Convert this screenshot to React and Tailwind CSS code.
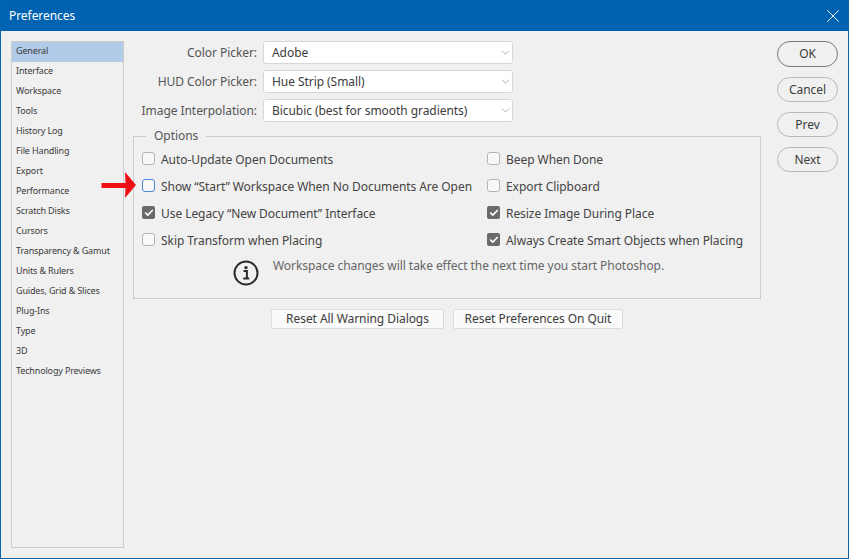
import { X, ChevronDown, Check } from 'lucide-react';

const categories = [
  'General', 'Interface', 'Workspace', 'Tools', 'History Log', 'File Handling', 'Export',
  'Performance', 'Scratch Disks', 'Cursors', 'Transparency & Gamut', 'Units & Rulers',
  'Guides, Grid & Slices', 'Plug-Ins', 'Type', '3D', 'Technology Previews',
];

const selects = [
  { label: 'Color Picker:', value: 'Adobe' },
  { label: 'HUD Color Picker:', value: 'Hue Strip (Small)' },
  { label: 'Image Interpolation:', value: 'Bicubic (best for smooth gradients)' },
];

const leftOptions = [
  { label: 'Auto-Update Open Documents' },
  { label: 'Show “Start” Workspace When No Documents Are Open', focused: true },
  { label: 'Use Legacy “New Document” Interface', checked: true },
  { label: 'Skip Transform when Placing' },
];

const rightOptions = [
  { label: 'Beep When Done' },
  { label: 'Export Clipboard' },
  { label: 'Resize Image During Place', checked: true },
  { label: 'Always Create Smart Objects when Placing', checked: true },
];

function Option({ label, checked, focused }) {
  return (
    <div className="flex h-[27px] items-center gap-[6px]">
      {checked ? (
        <span className="flex h-[13px] w-[13px] items-center justify-center rounded-[2px] bg-[#6a6a6a]">
          <Check className="h-[10px] w-[10px] text-white" strokeWidth={4} />
        </span>
      ) : (
        <span
          className={`h-[13px] w-[13px] rounded-[3px] border bg-[#f8f8f8] ${
            focused ? 'border-[#4a8ad4]' : 'border-[#b4b4b4]'
          }`}
        />
      )}
      <span className="whitespace-nowrap pt-[2px]">{label}</span>
    </div>
  );
}

function SideButton({ label, primary }) {
  return (
    <button
      className={`w-[61px] rounded-full border text-[12px] text-[#3c3c3c] ${
        primary ? 'h-[26px] border-[#7a7a7a]' : 'h-[25px] border-[#b9b9b9]'
      }`}
    >
      {label}
    </button>
  );
}

export default function App() {
  return (
    <div className="relative flex h-[559px] w-[849px] flex-col overflow-hidden border-x border-b border-[#0a64ad] bg-[#f0f0f0] font-['Noto_Sans',sans-serif] text-[12px] tracking-[-0.06px] text-[#444444]">
      {/* Title bar */}
      <div className="flex h-[31px] shrink-0 items-center justify-between bg-[#0063b1] pl-[8px] pr-[4px] text-[12px] text-white">
        <span className="pt-[1px]">Preferences</span>
        <X className="h-[22px] w-[22px]" strokeWidth={1} />
      </div>

      <div className="flex flex-1 pl-[10px] pr-[10px] pt-[10px] pb-[10px]">
        {/* Category list */}
        <div className="h-[507px] w-[113px] shrink-0 border border-[#cccccc] bg-[#f0f0f0] text-[9px] tracking-[-0.15px] text-[#3a3a3a]">
          {categories.map((name, i) => (
            <div
              key={name}
              className={`flex h-[20px] items-center whitespace-nowrap pb-[2px] pl-[4px] ${
                i === 0 ? 'bg-[#b1cbe8]' : ''
              }`}
            >
              {name}
            </div>
          ))}
        </div>

        {/* Main panel */}
        <div className="ml-[9px] w-[628px] shrink-0">
          <div className="flex flex-col gap-[6px]">
            {selects.map((s) => (
              <div key={s.label} className="flex items-center">
                <span className="w-[125px] whitespace-nowrap pr-[1px] text-right text-[#555555]">{s.label}</span>
                <div className="ml-[5px] flex h-[23px] w-[250px] items-center justify-between rounded-[3px] border border-[#d6d6d6] bg-white pl-[8px] text-[#3c3c3c]">
                  <span>{s.value}</span>
                  <ChevronDown className="h-[13px] w-[13px] text-[#999999]" strokeWidth={1.5} />
                </div>
              </div>
            ))}
          </div>

          <fieldset className="mt-[5px] h-[172px] border border-[#cccccc] pl-[8px]">
            <legend className="ml-[4px] px-[8px] text-[#555555]">Options</legend>
            <div className="flex">
              <div className="w-[345px]">
                {leftOptions.map((o) => (
                  <Option key={o.label} {...o} />
                ))}
              </div>
              <div>
                {rightOptions.map((o) => (
                  <Option key={o.label} {...o} />
                ))}
              </div>
            </div>
            <div className="ml-[91px] mt-[4px] flex items-start gap-[14px]">
              <svg width="26" height="26" viewBox="0 0 26 26" className="mt-[3px]" fill="none">
                <circle cx="13" cy="13" r="11.5" stroke="#2b2b2b" strokeWidth="2" />
                <circle cx="13" cy="7.6" r="1.7" fill="#2b2b2b" />
                <path d="M10.5 11h3.4v7.2M10.3 18.6h6" stroke="#2b2b2b" strokeWidth="2" />
              </svg>
              <span className="whitespace-nowrap text-[#666666]">
                Workspace changes will take effect the next time you start Photoshop.
              </span>
            </div>
          </fieldset>

          <div className="ml-[138px] mt-[10px] flex gap-[9px]">
            <button className="h-[20px] w-[173px] rounded-[2px] border border-[#dcdcdc] bg-[#fafafa] text-[#3c3c3c]">
              Reset All Warning Dialogs
            </button>
            <button className="h-[20px] w-[170px] rounded-[2px] border border-[#dcdcdc] bg-[#fafafa] text-[#3c3c3c]">
              Reset Preferences On Quit
            </button>
          </div>
        </div>

        {/* Dialog buttons */}
        <div className="ml-[16px] flex flex-col gap-[10px]">
          <SideButton label="OK" primary />
          <SideButton label="Cancel" />
          <SideButton label="Prev" />
          <SideButton label="Next" />
        </div>
      </div>

      {/* Red annotation arrow */}
      <svg width="36" height="28" viewBox="0 0 36 28" className="absolute left-[100px] top-[172px]" fill="#ee0e16">
        <path d="M0.5 11h24L24 0 35 13 24 26 24.5 16H0.5z" />
      </svg>
    </div>
  );
}
